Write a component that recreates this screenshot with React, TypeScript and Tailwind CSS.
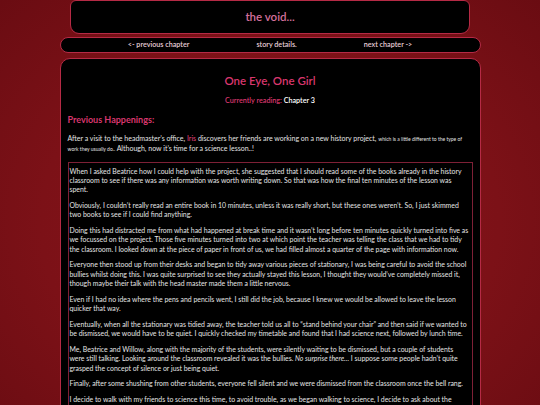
import React from "react";

const paras: React.ReactNode[][] = [
  [
    "When I asked Beatrice how I could help with the project, she suggested that I should read some of the books already in the history",
    "classroom to see if there was any information was worth writing down. So that was how the final ten minutes of the lesson was",
    "spent.",
  ],
  [
    "Obviously, I couldn’t really read an entire book in 10 minutes, unless it was really short, but these ones weren’t. So, I just skimmed",
    "two books to see if I could find anything.",
  ],
  [
    "Doing this had distracted me from what had happened at break time and it wasn’t long before ten minutes quickly turned into five as",
    "we focussed on the project. Those five minutes turned into two at which point the teacher was telling the class that we had to tidy",
    "the classroom. I looked down at the piece of paper in front of us, we had filled almost a quarter of the page with information now.",
  ],
  [
    "Everyone then stood up from their desks and began to tidy away various pieces of stationary, I was being careful to avoid the school",
    "bullies whilst doing this. I was quite surprised to see they actually stayed this lesson, I thought they would’ve completely missed it,",
    "though maybe their talk with the head master made them a little nervous.",
  ],
  [
    "Even if I had no idea where the pens and pencils went, I still did the job, because I knew we would be allowed to leave the lesson",
    "quicker that way.",
  ],
  [
    "Eventually, when all the stationary was tidied away, the teacher told us all to “stand behind your chair” and then said if we wanted to",
    "be dismissed, we would have to be quiet. I quickly checked my timetable and found that I had science next, followed by lunch time.",
  ],
  [
    "Me, Beatrice and Willow, along with the majority of the students, were silently waiting to be dismissed, but a couple of students",
    <>
      were still talking. Looking around the classroom revealed it was the bullies. <i>No surprise there…</i> I suppose some people hadn’t quite
    </>,
    "grasped the concept of silence or just being quiet.",
  ],
  [
    "Finally, after some shushing from other students, everyone fell silent and we were dismissed from the classroom once the bell rang.",
  ],
  [
    "I decide to walk with my friends to science this time, to avoid trouble, as we began walking to science, I decide to ask about the",
    "project they were working on, since I had been wondering about it for a while now.",
  ],
];

export default function App() {
  return (
    <div
      className="min-h-[405px] w-full bg-[radial-gradient(ellipse_at_center,#8c161c_0%,#7c1117_60%,#6a0c12_100%)] text-[#e4e4e4]"
      style={{ fontFamily: "Lato, 'Open Sans', sans-serif" }}
    >
      <div className="mx-auto flex w-[421px] flex-col items-center">
        <div className="flex h-[34px] w-[400px] items-center justify-center rounded-b-[9px] rounded-t-[6px] border border-[#b52a45] bg-black">
          <span className="text-[11.5px] font-semibold text-[#d4709c]">the void...</span>
        </div>
        <div className="mt-[3px] flex h-[16px] w-[421px] items-center justify-center gap-[67px] rounded-full border border-[#b52a45] bg-black text-[7.2px] font-semibold text-[#e6cdd6]">
          <span>&lt;- previous chapter</span>
          <span>story details.</span>
          <span>next chapter -&gt;</span>
        </div>
        <div className="mt-[5px] w-[421px] rounded-t-[10px] border border-[#b52a45] bg-black px-[7px] pb-[20px] pt-[15px]">
          <h1 className="text-center text-[11.5px] font-semibold leading-[14px] text-[#d9376e]">One Eye, One Girl</h1>
          <p className="mt-[8px] text-center text-[7.2px] font-semibold leading-[10px]">
            <span className="text-[#d9376e]">Currently reading:</span>{" "}
            <span className="text-white">Chapter 3</span>
          </p>
          <h2 className="mt-[8px] text-[9px] font-bold leading-[12px] text-[#d9376e]">Previous Happenings:</h2>
          <p className="mt-[8px] text-[7px] leading-[9.3px]">
            After a visit to the headmaster’s office, <span className="text-[#e0437c]">Iris</span> discovers her friends are working on a new history project,{" "}
            <span className="text-[5px] leading-[9.3px]">which is a little different to the type of work they usually do..</span> Although, now it’s time for a science lesson..!
          </p>
          <div className="mt-[7px] border border-[#7e2036] px-[1px] pt-[4px] pb-[4px] text-[6.9px] leading-[9.3px]">
            {paras.map((lines, i) => (
              <p key={i} className="mb-[6.5px] whitespace-nowrap">
                {lines.map((l, j) => (
                  <React.Fragment key={j}>
                    {j > 0 && <br />}
                    {l}
                  </React.Fragment>
                ))}
              </p>
            ))}
          </div>
        </div>
      </div>
    </div>
  );
}
